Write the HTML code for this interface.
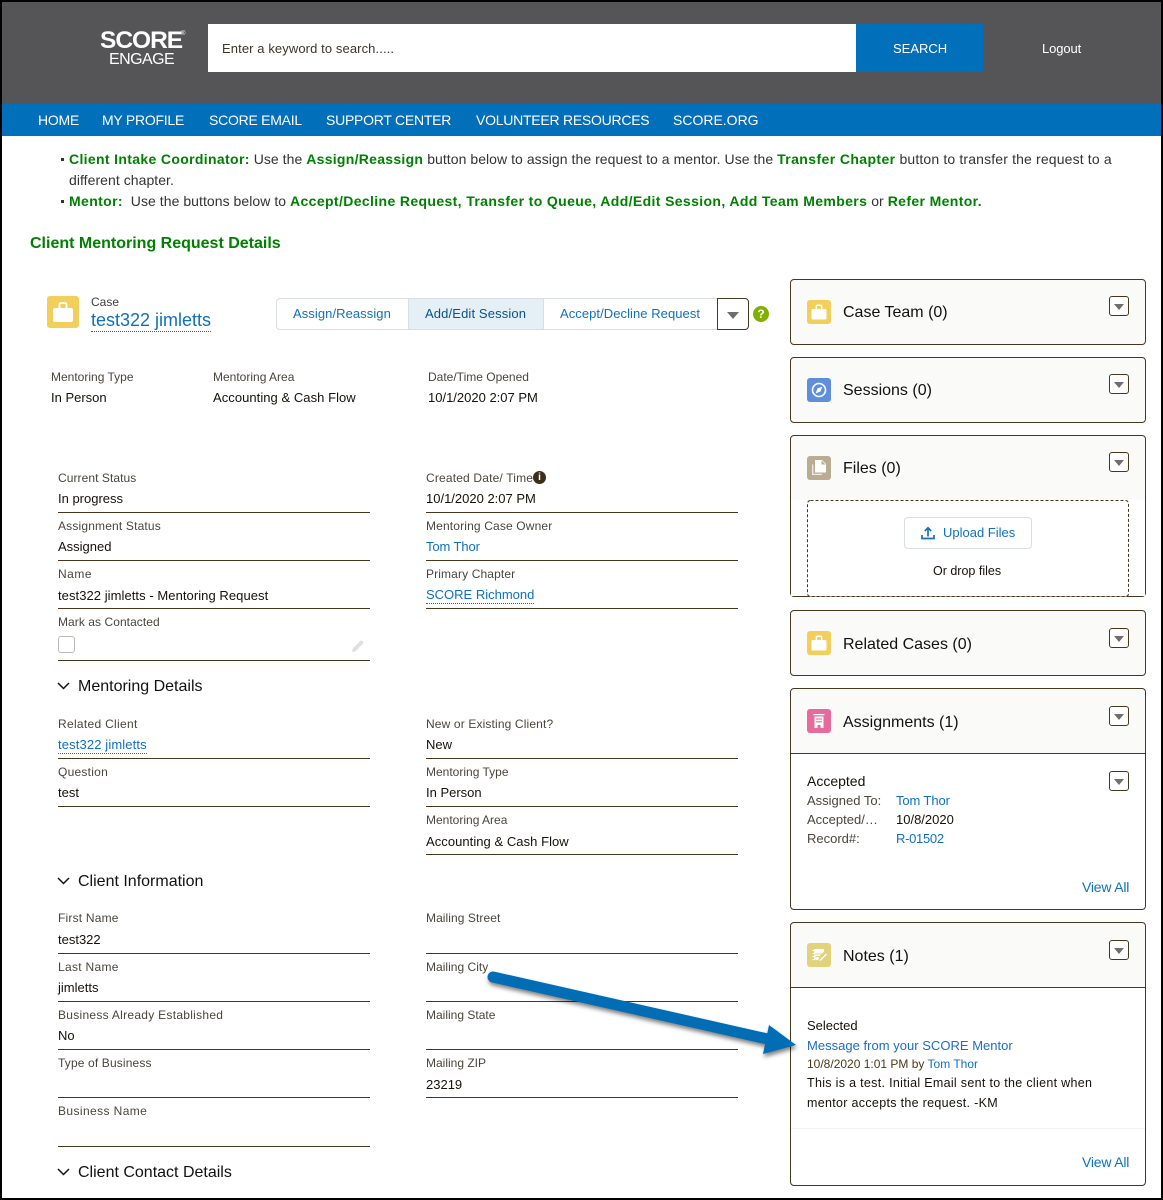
<!DOCTYPE html>
<html><head><meta charset="utf-8"><title>Client Mentoring Request Details</title>
<style>
html,body{margin:0;padding:0;background:#fff}
#p{position:relative;width:1163px;height:1200px;overflow:hidden;background:#fff;font-family:"Liberation Sans",Arial,sans-serif;color:#111}
#p div,#p span.a,#p svg{position:absolute}
.t{white-space:nowrap;line-height:20px;font-size:13px;color:#16110a}
.l{white-space:nowrap;line-height:20px;font-size:12px;color:#4a453c}
.k{color:#0f70c0}
.u{border-bottom:1px dotted #0f70c0;line-height:16px!important}
.r{height:1px;background:#45381f}
.n{color:#fff;font-size:14px;white-space:nowrap;line-height:20px;top:110px;letter-spacing:-.25px}
.g{color:#008000;font-weight:bold;letter-spacing:.37px}
.s{white-space:nowrap;font-size:14px;line-height:21px;color:#333;left:69px;letter-spacing:.05px}
.b{font-size:16px;line-height:22px;white-space:nowrap;color:#111}
.pn{left:790px;width:354px;border:1px solid #45381f;border-radius:4px;background:#fafaf8}
.w{background:#fff}
.ic{left:807px;width:24px;height:24px;border-radius:3px}
.dd{left:1109px;width:18px;height:18px;border:1px solid #45381f;border-radius:3px;background:#fff}
.dd:after{content:"";position:absolute;left:4px;top:7px;border-left:5px solid transparent;border-right:5px solid transparent;border-top:6px solid #706e6b}
.sec{font-size:16px;left:78px;line-height:22px;white-space:nowrap;color:#111}
.va{font-size:14px;letter-spacing:-.2px}
</style></head><body>
<div id="p">
<!-- header -->
<div style="left:0;top:0;width:1163px;height:104px;background:#555557"></div>
<div style="left:0;top:104px;width:1163px;height:32px;background:#016fb9"></div>
<div style="left:100px;top:28px;color:#fff;font-size:24.500px;line-height:26px;font-weight:bold;letter-spacing:-1px;white-space:nowrap">SCORE</div>
<div style="left:181px;top:31px;color:#fff;font-size:6px;line-height:7px">®</div>
<div style="left:109px;top:50px;color:#fff;font-size:16px;line-height:20px;letter-spacing:-.55px;white-space:nowrap">ENGAGE</div>
<div style="left:208px;top:24px;width:648px;height:48px;background:#fff"></div>
<div style="left:222px;top:39px;font-size:13px;line-height:20px;color:#3c3529;letter-spacing:.1px;white-space:nowrap">Enter a keyword to search.....</div>
<div style="left:856px;top:24px;width:127px;height:48px;background:#016fb9"></div>
<div style="left:893px;top:39px;font-size:13px;line-height:20px;color:#fff;white-space:nowrap">SEARCH</div>
<div style="left:1042px;top:39px;font-size:13px;line-height:20px;color:#fff;white-space:nowrap;letter-spacing:-.1px">Logout</div>
<div class="n" style="left:38px">HOME</div>
<div class="n" style="left:102px">MY PROFILE</div>
<div class="n" style="left:209px">SCORE EMAIL</div>
<div class="n" style="left:326px">SUPPORT CENTER</div>
<div class="n" style="left:476px">VOLUNTEER RESOURCES</div>
<div class="n" style="left:673px;letter-spacing:0">SCORE.ORG</div>
<!-- intro -->
<div style="left:61px;top:158px;width:3px;height:3px;background:#333"></div>
<div style="left:61px;top:200px;width:3px;height:3px;background:#333"></div>
<div class="s" style="top:149px"><span class="g" style="letter-spacing:.34px">Client Intake Coordinator:</span> Use the <span class="g" style="letter-spacing:.28px">Assign/Reassign</span> button below to assign the request to a mentor. Use the <span class="g" style="letter-spacing:.4px">Transfer Chapter</span> <span style="letter-spacing:.15px">button to transfer the request to a</span></div>
<div class="s" style="top:170px">different chapter.</div>
<div class="s" style="top:191px"><span class="g">Mentor:</span>&nbsp; Use the buttons below to <span class="g">Accept/Decline Request, Transfer to Queue, Add/Edit Session, Add Team Members</span> or <span class="g">Refer Mentor.</span></div>
<div class="g" style="left:30px;top:234px;font-size:16px;line-height:20px;white-space:nowrap;letter-spacing:0">Client Mentoring Request Details</div>
<!-- case header -->
<div style="left:47px;top:296px;width:32px;height:32px;border-radius:3px;background:#f2cf5b"></div>
<svg style="left:47px;top:296px" width="32" height="32" viewBox="0 0 32 32"><path fill="#fff" d="M6 14a2 2 0 0 1 2-2h16a2 2 0 0 1 2 2v10a2 2 0 0 1-2 2H8a2 2 0 0 1-2-2z"/><path fill="none" stroke="#fff" stroke-width="1.800" d="M12.500 12V8.500a1.500 1.500 0 0 1 1.500-1.500h4a1.500 1.500 0 0 1 1.500 1.500V12"/></svg>
<div class="l" style="left:91px;top:292px;color:#3e3e3c">Case</div>
<div class="k" style="left:91px;top:310px;font-size:18px;line-height:20px;white-space:nowrap;border-bottom:1px dotted #0f70c0;padding-bottom:1px">test322 jimletts</div>
<div style="left:276px;top:298px;width:441px;height:30px;border:1px solid #d8dde6;border-right:0;border-radius:4px 0 0 4px;background:#fff"></div>
<div style="left:408px;top:299px;width:134px;height:30px;background:#e4eff6;border-left:1px solid #d8dde6;border-right:1px solid #d8dde6"></div>
<div class="t k" style="left:293px;top:304px;letter-spacing:.07px">Assign/Reassign</div>
<div class="t" style="left:425px;top:304px;color:#06538f;letter-spacing:.13px">Add/Edit Session</div>
<div class="t k" style="left:560px;top:304px;letter-spacing:.06px">Accept/Decline Request</div>
<div style="left:717px;top:298px;width:30px;height:30px;border:1px solid #45381f;border-radius:0 4px 4px 0;background:#fff"></div>
<div style="left:727px;top:312px;width:0;height:0;border-left:6px solid transparent;border-right:6px solid transparent;border-top:7px solid #706e6b"></div>
<div style="left:753px;top:306px;width:16px;height:16px;border-radius:8px;background:#7fb000;color:#fff;font-size:12px;font-weight:bold;line-height:16px;text-align:center">?</div>
<!-- highlights -->
<div class="l" style="left:51px;top:367px">Mentoring Type</div><div class="t" style="left:51px;top:388px">In Person</div>
<div class="l" style="left:213px;top:367px">Mentoring Area</div><div class="t" style="left:213px;top:388px;letter-spacing:.05px">Accounting &amp; Cash Flow</div>
<div class="l" style="left:428px;top:367px">Date/Time Opened</div><div class="t" style="left:428px;top:388px">10/1/2020 2:07 PM</div>
<!-- fields left -->
<div class="l" style="left:58px;top:468px;letter-spacing:.07px">Current Status</div><div class="t" style="left:58px;top:489px">In progress</div><div class="r" style="left:58px;top:512px;width:312px"></div>
<div class="l" style="left:58px;top:516px;letter-spacing:.17px">Assignment Status</div><div class="t" style="left:58px;top:537px">Assigned</div><div class="r" style="left:58px;top:560px;width:312px"></div>
<div class="l" style="left:58px;top:564px;letter-spacing:.5px">Name</div><div class="t" style="left:58px;top:586px;letter-spacing:.06px">test322 jimletts - Mentoring Request</div><div class="r" style="left:58px;top:608px;width:312px"></div>
<div class="l" style="left:58px;top:612px;letter-spacing:.06px">Mark as Contacted</div>
<div style="left:58px;top:636px;width:15px;height:15px;border:1px solid #bdbbb8;border-radius:3px;background:#fff"></div>
<svg style="left:351px;top:639px" width="14" height="14" viewBox="0 0 14 14"><path fill="#e0dfdd" d="M1 13l.8-3.400L9.600 1.800a1 1 0 0 1 1.400 0l1.200 1.200a1 1 0 0 1 0 1.400L4.400 12.200z"/></svg>
<div class="r" style="left:58px;top:660px;width:312px"></div>
<!-- fields right -->
<div class="l" style="left:426px;top:468px;letter-spacing:.17px">Created Date/ Time</div>
<div style="left:533px;top:471px;width:13px;height:13px;border-radius:7px;background:#3a2f18;color:#fff;font-size:10px;font-weight:bold;line-height:13px;text-align:center">i</div>
<div class="t" style="left:426px;top:489px">10/1/2020 2:07 PM</div><div class="r" style="left:426px;top:512px;width:312px"></div>
<div class="l" style="left:426px;top:516px;letter-spacing:.15px">Mentoring Case Owner</div><div class="t k" style="left:426px;top:537px;letter-spacing:-.1px">Tom Thor</div><div class="r" style="left:426px;top:560px;width:312px"></div>
<div class="l" style="left:426px;top:564px;letter-spacing:.13px">Primary Chapter</div><div class="t k u" style="left:426px;top:587px">SCORE Richmond</div><div class="r" style="left:426px;top:608px;width:312px"></div>
<!-- Mentoring Details -->
<svg style="left:57px;top:681px" width="13" height="10" viewBox="0 0 13 10"><path fill="none" stroke="#111" stroke-width="1.500" d="M1 2l5.500 5.500L12 2"/></svg>
<div class="sec" style="top:676px">Mentoring Details</div>
<div class="l" style="left:58px;top:714px;letter-spacing:.3px">Related Client</div><div class="t k u" style="left:58px;top:737px;letter-spacing:.13px">test322 jimletts</div><div class="r" style="left:58px;top:758px;width:312px"></div>
<div class="l" style="left:58px;top:762px;letter-spacing:.25px">Question</div><div class="t" style="left:58px;top:783px">test</div><div class="r" style="left:58px;top:806px;width:312px"></div>
<div class="l" style="left:426px;top:714px;letter-spacing:.14px">New or Existing Client?</div><div class="t" style="left:426px;top:735px">New</div><div class="r" style="left:426px;top:758px;width:312px"></div>
<div class="l" style="left:426px;top:762px">Mentoring Type</div><div class="t" style="left:426px;top:783px">In Person</div><div class="r" style="left:426px;top:806px;width:312px"></div>
<div class="l" style="left:426px;top:810px">Mentoring Area</div><div class="t" style="left:426px;top:832px;letter-spacing:.05px">Accounting &amp; Cash Flow</div><div class="r" style="left:426px;top:854px;width:312px"></div>
<!-- Client Information -->
<svg style="left:57px;top:876px" width="13" height="10" viewBox="0 0 13 10"><path fill="none" stroke="#111" stroke-width="1.500" d="M1 2l5.500 5.500L12 2"/></svg>
<div class="sec" style="top:871px">Client Information</div>
<div class="l" style="left:58px;top:908px;letter-spacing:.2px">First Name</div><div class="t" style="left:58px;top:930px">test322</div><div class="r" style="left:58px;top:953px;width:312px"></div>
<div class="l" style="left:58px;top:957px;letter-spacing:.3px">Last Name</div><div class="t" style="left:58px;top:978px">jimletts</div><div class="r" style="left:58px;top:1001px;width:312px"></div>
<div class="l" style="left:58px;top:1005px;letter-spacing:.28px">Business Already Established</div><div class="t" style="left:58px;top:1026px">No</div><div class="r" style="left:58px;top:1049px;width:312px"></div>
<div class="l" style="left:58px;top:1053px;letter-spacing:.14px">Type of Business</div><div class="r" style="left:58px;top:1097px;width:312px"></div>
<div class="l" style="left:58px;top:1101px;letter-spacing:.4px">Business Name</div><div class="r" style="left:58px;top:1146px;width:312px"></div>
<div class="l" style="left:426px;top:908px;letter-spacing:.07px">Mailing Street</div><div class="r" style="left:426px;top:953px;width:312px"></div>
<div class="l" style="left:426px;top:957px;letter-spacing:.02px">Mailing City</div><div class="r" style="left:426px;top:1001px;width:312px"></div>
<div class="l" style="left:426px;top:1005px">Mailing State</div><div class="r" style="left:426px;top:1049px;width:312px"></div>
<div class="l" style="left:426px;top:1053px">Mailing ZIP</div><div class="t" style="left:426px;top:1075px">23219</div><div class="r" style="left:426px;top:1097px;width:312px"></div>
<svg style="left:57px;top:1167px" width="13" height="10" viewBox="0 0 13 10"><path fill="none" stroke="#111" stroke-width="1.500" d="M1 2l5.500 5.500L12 2"/></svg>
<div class="sec" style="top:1162px">Client Contact Details</div>
<!-- Right panels -->
<div class="pn" style="top:279px;height:64px"></div>
<div class="ic" style="top:300px;background:#f2cf5b"></div>
<svg style="left:807px;top:300px" width="24" height="24" viewBox="0 0 32 32"><path fill="#fff" d="M6 14a2 2 0 0 1 2-2h16a2 2 0 0 1 2 2v10a2 2 0 0 1-2 2H8a2 2 0 0 1-2-2z"/><path fill="none" stroke="#fff" stroke-width="2" d="M12.500 12V8.500a1.500 1.500 0 0 1 1.500-1.500h4a1.500 1.500 0 0 1 1.500 1.500V12"/></svg>
<div class="b" style="left:843px;top:302px">Case Team (0)</div>
<div class="dd" style="top:296px"></div>

<div class="pn" style="top:357px;height:64px"></div>
<div class="ic" style="top:378px;background:#5f8fdc"></div>
<svg style="left:807px;top:378px" width="24" height="24" viewBox="0 0 24 24"><circle cx="12" cy="12" r="6.500" fill="none" stroke="#fff" stroke-width="1.600"/><path fill="#fff" d="M15.500 8.500l-2 5-5 2 2-5z"/></svg>
<div class="b" style="left:843px;top:380px">Sessions (0)</div>
<div class="dd" style="top:374px"></div>

<div class="pn" style="top:435px;height:160px"></div>
<div class="w" style="left:791px;top:500px;width:354px;height:96px"></div>
<svg style="left:807px;top:500px" width="322" height="97" viewBox="0 0 322 97"><rect x=".5" y=".5" width="321" height="96" rx="3" fill="#fff" stroke="#45381f" stroke-dasharray="3 2"/></svg>
<div class="ic" style="top:456px;background:#baac93"></div>
<svg style="left:807px;top:456px" width="24" height="24" viewBox="0 0 24 24"><path fill="none" stroke="#fff" stroke-opacity=".75" stroke-width="1.300" d="M5.700 8.500V18.400H15"/><path fill="#fff" d="M8 4h7l4 4v8.500H8zM14.500 4.500V8.500H18.500z" fill-rule="evenodd"/></svg>
<div class="b" style="left:843px;top:458px">Files (0)</div>
<div class="dd" style="top:452px"></div>
<div style="left:904px;top:517px;width:126px;height:30px;border:1px solid #d8dde6;border-radius:4px;background:#fff"></div>
<svg style="left:920px;top:525px" width="16" height="16" viewBox="0 0 16 16"><path fill="none" stroke="#1b6fb5" stroke-width="1.700" d="M2 10v3.500h12V10M8 11.500V3M4.800 6L8 2.800 11.200 6"/></svg>
<div class="t k" style="left:943px;top:523px">Upload Files</div>
<div class="t" style="left:933px;top:561px;font-size:12.500px">Or drop files</div>

<div class="pn" style="top:610px;height:64px"></div>
<div class="ic" style="top:631px;background:#f2cf5b"></div>
<svg style="left:807px;top:631px" width="24" height="24" viewBox="0 0 32 32"><path fill="#fff" d="M6 14a2 2 0 0 1 2-2h16a2 2 0 0 1 2 2v10a2 2 0 0 1-2 2H8a2 2 0 0 1-2-2z"/><path fill="none" stroke="#fff" stroke-width="2" d="M12.500 12V8.500a1.500 1.500 0 0 1 1.500-1.500h4a1.500 1.500 0 0 1 1.500 1.500V12"/></svg>
<div class="b" style="left:843px;top:634px">Related Cases (0)</div>
<div class="dd" style="top:628px"></div>

<div class="pn" style="top:688px;height:220px"></div>
<div class="w" style="left:791px;top:754px;width:354px;height:155px;border-radius:0 0 4px 4px"></div>
<div class="r" style="left:791px;top:753px;width:354px"></div>
<div class="ic" style="top:709px;background:#e76a9c"></div>
<svg style="left:807px;top:709px" width="24" height="24" viewBox="0 0 24 24"><path fill="#fff" d="M6.500 5h11v1.300h-11zM7.500 7.500h9V19h-3v-3h-3v3h-3z"/><path fill="#e76a9c" d="M9.300 9.300h1.500v1.500H9.300zM11.300 9.300h1.500v1.500h-1.500zM13.300 9.300h1.500v1.500h-1.500zM9.300 12h1.500v1.500H9.300zM11.300 12h1.500v1.500h-1.500zM13.300 12h1.500v1.500h-1.500z"/></svg>
<div class="b" style="left:843px;top:712px">Assignments (1)</div>
<div class="dd" style="top:706px"></div>
<div class="t" style="left:807px;top:771px;font-size:14px">Accepted</div>
<div class="dd" style="top:771px"></div>
<div class="l" style="left:807px;top:791px;font-size:13px;color:#4a453c">Assigned To:</div><div class="t k" style="left:896px;top:791px;letter-spacing:-.1px">Tom Thor</div>
<div class="l" style="left:807px;top:810px;font-size:13px;color:#4a453c">Accepted/…</div><div class="t" style="left:896px;top:810px">10/8/2020</div>
<div class="l" style="left:807px;top:829px;font-size:13px;color:#4a453c">Record#:</div><div class="t k" style="left:896px;top:829px;letter-spacing:-.3px">R-01502</div>
<div class="t k va" style="left:1082px;top:877px">View All</div>

<div class="pn" style="top:922px;height:262px"></div>
<div class="w" style="left:791px;top:988px;width:354px;height:197px;border-radius:0 0 4px 4px"></div>
<div class="r" style="left:791px;top:987px;width:354px"></div>
<div style="left:791px;top:1128px;width:354px;height:1px;background:#f3f2f2"></div>
<div class="ic" style="top:943px;background:#e3d27c"></div>
<svg style="left:807px;top:943px" width="24" height="24" viewBox="0 0 24 24"><path fill="#fff" d="M7 6h10v2.500l-2 2H7zM7 11.500h7l-1.500 1.500H7zM7 14h5l-.5 3H7zM5.500 7h3v1h-3zM5.500 10h3v1h-3zM5.500 13h3v1h-3zM5.500 16h3v1h-3zM19 10.500l1 1-6 6-1.500.5.500-1.500z"/></svg>
<div class="b" style="left:843px;top:946px">Notes (1)</div>
<div class="dd" style="top:940px"></div>
<div class="t" style="left:807px;top:1016px">Selected</div>
<div class="t k" style="left:807px;top:1036px;font-size:13px;color:#1a6dc8;letter-spacing:.02px">Message from your SCORE Mentor</div>
<div class="l" style="left:807px;top:1054px;color:#4a3a18">10/8/2020 1:01 PM by <span class="k">Tom Thor</span></div>
<div class="t" style="left:807px;top:1073px;font-size:12.500px;letter-spacing:.31px">This is a test. Initial Email sent to the client when</div>
<div class="t" style="left:807px;top:1093px;font-size:12.500px;letter-spacing:.31px">mentor accepts the request. -KM</div>
<div class="t k va" style="left:1082px;top:1152px">View All</div>
<!-- arrow -->
<svg style="left:0;top:0;filter:drop-shadow(1px 3px 2px rgba(0,0,0,.5))" width="1163" height="1200" viewBox="0 0 1163 1200"><path d="M493 977L772 1040" stroke="#016db5" stroke-width="11" stroke-linecap="round" fill="none"/><path d="M769 1025L796 1045L763 1054z" fill="#016db5"/></svg>
<!-- outer frame -->
<div style="left:0;top:0;width:1159px;height:1196px;border:2px solid #000;z-index:9"></div>
</div>
</body></html>
